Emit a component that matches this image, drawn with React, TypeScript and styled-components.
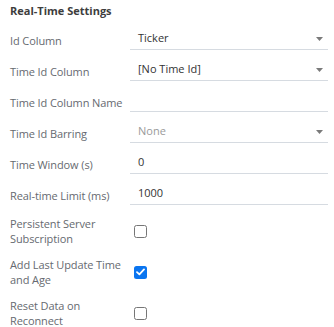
import React from 'react'
import styled, { createGlobalStyle } from 'styled-components'

const GlobalStyle = createGlobalStyle`
body {
  margin: 0;
  background: #ffffff;
  font-family: "Open Sans", "Liberation Sans", sans-serif;
}
`

type Field =
  | { kind: 'select'; label: string; value: string; disabled?: boolean }
  | { kind: 'input'; label: string; value: string }
  | { kind: 'check'; label: string; checked: boolean }

const fields: Field[] = [
  { kind: 'select', label: 'Id Column', value: 'Ticker' },
  { kind: 'select', label: 'Time Id Column', value: '[No Time Id]' },
  { kind: 'input', label: 'Time Id Column Name', value: '' },
  { kind: 'select', label: 'Time Id Barring', value: 'None', disabled: true },
  { kind: 'input', label: 'Time Window (s)', value: '0' },
  { kind: 'input', label: 'Real-time Limit (ms)', value: '1000' },
  { kind: 'check', label: 'Persistent Server Subscription', checked: false },
  { kind: 'check', label: 'Add Last Update Time and Age', checked: true },
  { kind: 'check', label: 'Reset Data on Reconnect', checked: false },
]

const Arrow = () => (
  <svg width="7" height="5" viewBox="0 0 7 5">
    <path d="M0 0 H7 L3.5 4 Z" fill="#7a7a7a" />
  </svg>
)

const Tick = () => (
  <svg width="9" height="8" viewBox="0 0 9 8">
    <path d="M1 4.2 L3.4 6.4 L8 1.4" stroke="#ffffff" strokeWidth="1.8" fill="none" strokeLinecap="round" strokeLinejoin="round" />
  </svg>
)

const App = () => {
  return (
    <Panel>
      <GlobalStyle />
      <Title>Real-Time Settings</Title>
      <Form>
        {fields.map((f) => (
          <Row key={f.label} tall={f.kind === 'check'}>
            <Label>{f.label}</Label>
            {f.kind === 'check' ? (
              <Box checked={f.checked}>{f.checked && <Tick />}</Box>
            ) : (
              <Field>
                <Value muted={f.kind === 'select' && !!f.disabled}>{f.value}</Value>
                {f.kind === 'select' && <Arrow />}
              </Field>
            )}
          </Row>
        ))}
      </Form>
    </Panel>
  )
}

export default App

const Panel = styled.div`
width: 334px;
padding: 3px 6px 0 10px;
box-sizing: border-box;
`
const Title = styled.div`
font-size: 11px;
line-height: 16px;
font-weight: 700;
color: #3d3d3d;
`
const Form = styled.div`
display: flex;
flex-direction: column;
gap: 11px;
margin-top: 11px;
`
const Row = styled.div<{ tall?: boolean }>`
display: flex;
align-items: center;
height: ${(p) => (p.tall ? '30px' : '20px')};
`
const Label = styled.div`
width: 120px;
flex-shrink: 0;
font-size: 11px;
line-height: 15px;
letter-spacing: -0.1px;
color: #666a70;
`
const Field = styled.div`
flex: 1;
height: 20px;
box-sizing: border-box;
padding: 0 5px 0 8px;
display: flex;
align-items: center;
justify-content: space-between;
border-bottom: 1px solid #d6dbe1;
`
const Value = styled.span<{ muted?: boolean }>`
font-size: 11px;
line-height: 16px;
margin-top: -3px;
color: ${(p) => (p.muted ? '#9a9a9a' : '#333333')};
`
const Box = styled.div<{ checked?: boolean }>`
width: 13px;
height: 13px;
box-sizing: border-box;
margin-left: 4px;
border-radius: 2.5px;
border: ${(p) => (p.checked ? 'none' : '1.5px solid #767676')};
background: ${(p) => (p.checked ? '#0a75f0' : '#ffffff')};
display: flex;
align-items: center;
justify-content: center;
`
